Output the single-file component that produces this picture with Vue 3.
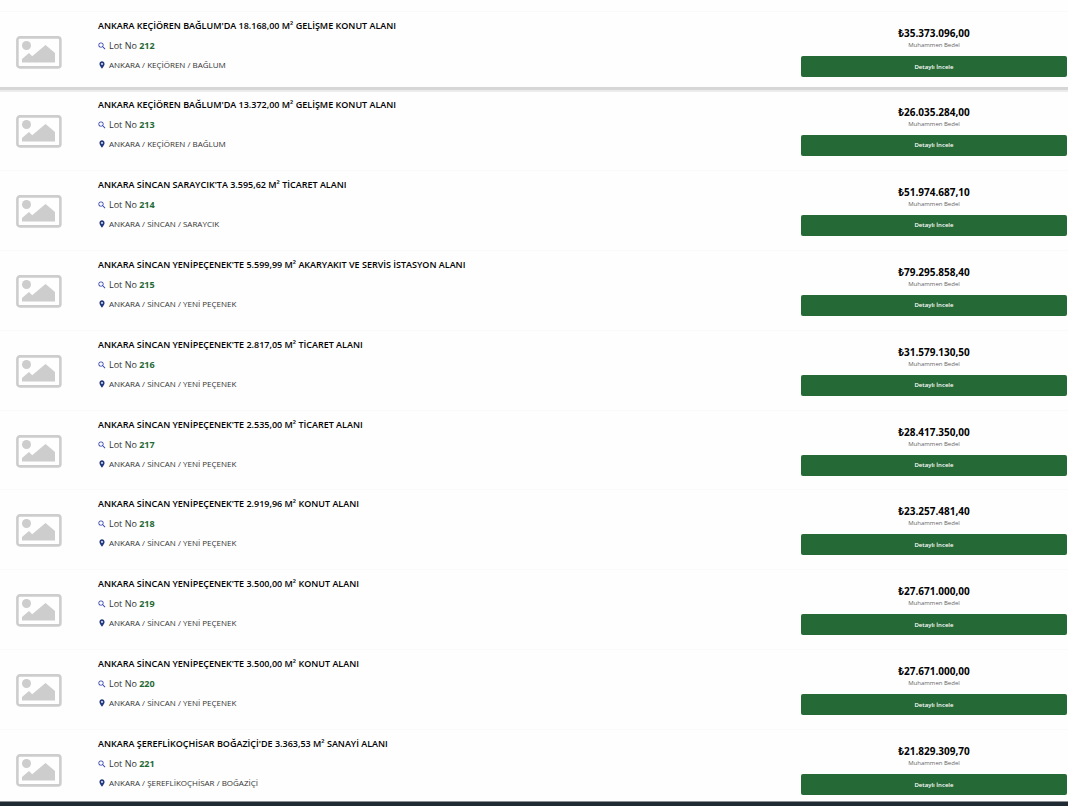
<template>
  <main class="page">
    <ul class="lot-list">
      <li v-for="lot in lots" :key="lot.no" class="lot-row">
        <div class="thumb">
          <svg viewBox="0 0 46 34" aria-hidden="true">
            <rect x="1.4" y="1.4" width="43" height="30" rx="2.5" fill="none" stroke="#cdcdcd" stroke-width="2.6" />
            <circle cx="10.5" cy="9.5" r="4.5" fill="#cdcdcd" />
            <path d="M6 26.500v-3.500l7-6 3.200 3.200L29.500 9l9.500 8v9.500z" fill="#cdcdcd" />
          </svg>
        </div>

        <div class="info">
          <h3>{{ lot.title }}</h3>
          <p class="lot-no">
            <svg class="icon" viewBox="2 2 20 20" aria-hidden="true">
              <path fill="#3443ad" d="M15.500 14h-.79l-.28-.27A6.470 6.470 0 0 0 16 9.500 6.500 6.500 0 1 0 9.500 16c1.610 0 3.090-.59 4.230-1.570l.27.28v.79l5 4.990L20.490 19l-4.990-5zm-6 0C7.010 14 5 11.990 5 9.500S7.010 5 9.500 5 14 7.010 14 9.500 11.990 14 9.500 14z" />
            </svg>
            <span>Lot No <strong>{{ lot.no }}</strong></span>
          </p>
          <p class="location">
            <svg class="icon" viewBox="1 1 22 22" aria-hidden="true">
              <path fill="#25397f" d="M12 2C8.130 2 5 5.130 5 9c0 5.250 7 13 7 13s7-7.750 7-13c0-3.870-3.130-7-7-7zm0 9.500a2.500 2.500 0 1 1 0-5 2.500 2.500 0 0 1 0 5z" />
            </svg>
            <span>{{ lot.location }}</span>
          </p>
        </div>

        <div class="price">
          <strong>₺{{ lot.price }}</strong>
          <small>Muhammen Bedel</small>
          <button type="button">Detaylı İncele</button>
        </div>
      </li>
    </ul>
    <footer class="footer"></footer>
  </main>
</template>

<script setup>
const lots = [
  { no: 212, title: "ANKARA KEÇİÖREN BAĞLUM'DA 18.168,00 M² GELİŞME KONUT ALANI", location: 'ANKARA / KEÇİÖREN / BAĞLUM', price: '35.373.096,00' },
  { no: 213, title: "ANKARA KEÇİÖREN BAĞLUM'DA 13.372,00 M² GELİŞME KONUT ALANI", location: 'ANKARA / KEÇİÖREN / BAĞLUM', price: '26.035.284,00' },
  { no: 214, title: "ANKARA SİNCAN SARAYCIK'TA 3.595,62 M² TİCARET ALANI", location: 'ANKARA / SİNCAN / SARAYCIK', price: '51.974.687,10' },
  { no: 215, title: "ANKARA SİNCAN YENİPEÇENEK'TE 5.599,99 M² AKARYAKIT VE SERVİS İSTASYON ALANI", location: 'ANKARA / SİNCAN / YENİ PEÇENEK', price: '79.295.858,40' },
  { no: 216, title: "ANKARA SİNCAN YENİPEÇENEK'TE 2.817,05 M² TİCARET ALANI", location: 'ANKARA / SİNCAN / YENİ PEÇENEK', price: '31.579.130,50' },
  { no: 217, title: "ANKARA SİNCAN YENİPEÇENEK'TE 2.535,00 M² TİCARET ALANI", location: 'ANKARA / SİNCAN / YENİ PEÇENEK', price: '28.417.350,00' },
  { no: 218, title: "ANKARA SİNCAN YENİPEÇENEK'TE 2.919,96 M² KONUT ALANI", location: 'ANKARA / SİNCAN / YENİ PEÇENEK', price: '23.257.481,40' },
  { no: 219, title: "ANKARA SİNCAN YENİPEÇENEK'TE 3.500,00 M² KONUT ALANI", location: 'ANKARA / SİNCAN / YENİ PEÇENEK', price: '27.671.000,00' },
  { no: 220, title: "ANKARA SİNCAN YENİPEÇENEK'TE 3.500,00 M² KONUT ALANI", location: 'ANKARA / SİNCAN / YENİ PEÇENEK', price: '27.671.000,00' },
  { no: 221, title: "ANKARA ŞEREFLİKOÇHİSAR BOĞAZİÇİ'DE 3.363,53 M² SANAYİ ALANI", location: 'ANKARA / ŞEREFLİKOÇHİSAR / BOĞAZİÇİ', price: '21.829.309,70' }
]
</script>

<style>
body {
  margin: 0;
  background: #fefefe;
}
</style>

<style scoped>
.page {
  display: flex;
  flex-direction: column;
  min-height: 100vh;
  box-sizing: border-box;
  padding-top: 11px;
  font-family: "Open Sans", "Noto Sans", sans-serif;
  color: #000;
}

.lot-list {
  flex: 1;
  display: flex;
  flex-direction: column;
  margin: 0;
  padding: 0;
  list-style: none;
}

.lot-row {
  flex: 1 0 auto;
  display: flex;
  align-items: flex-start;
  box-sizing: border-box;
  padding: 4px 0 13px;
  border-top: 1px solid #fafafa;
}

/* shadow strip under the first lot */
.lot-row:first-child {
  padding-bottom: 9px;
  border-bottom: 3px solid #d6d6d6;
}

.lot-row:nth-child(2) {
  border-top: 2px solid #ececec;
  padding-top: 3px;
}

.lot-row:last-child {
  padding-bottom: 5px;
}

.thumb {
  flex: none;
  width: 98px;
  box-sizing: border-box;
  padding: 20px 0 0 16px;
}

.thumb svg {
  display: block;
  width: 46px;
  height: 34px;
}

.info {
  flex: 1;
  min-width: 0;
}

.info h3,
.info p {
  margin: 0;
  line-height: 20px;
}

.info h3 {
  font-size: 9px;
  font-weight: 650;
}

.info p {
  display: flex;
  align-items: center;
  gap: 3px;
  color: #333;
}

.info .lot-no {
  font-size: 9px;
}

.info .location {
  font-size: 8px;
  line-height: 18px;
}

.lot-no strong {
  color: #256a35;
  font-weight: 700;
}

.icon {
  flex: none;
  width: 8px;
  height: 8px;
}

.price {
  flex: none;
  width: 25%;
  box-sizing: border-box;
  padding: 10px 1px 0 0;
  text-align: center;
}

.price strong,
.price small {
  display: block;
}

.price strong {
  font-size: 10px;
  font-weight: 700;
  line-height: 14px;
}

.price small {
  font-size: 6px;
  line-height: 11px;
  color: #666;
}

.price button {
  display: block;
  width: 100%;
  height: 21px;
  margin-top: 5px;
  padding: 0;
  border: 0;
  border-radius: 2px;
  background: #256936;
  color: #fff;
  font-family: inherit;
  font-size: 6px;
  font-weight: 600;
  cursor: pointer;
}

.price button:hover {
  background: #1d552b;
}

.footer {
  height: 4px;
  border-top: 1px solid #8a9094;
  background: #202a33;
}
</style>
